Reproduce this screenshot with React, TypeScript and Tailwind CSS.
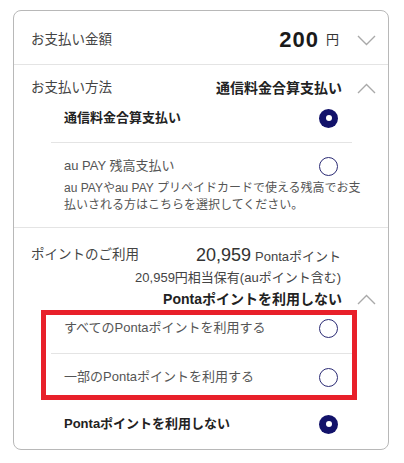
import React from "react";

const FONT = { fontFamily: '"Liberation Sans", "Noto Sans CJK JP", sans-serif' };

function Chevron({ up }: { up?: boolean }) {
  return (
    <svg width="19" height="11" viewBox="0 0 19 11" className="shrink-0">
      <polyline
        points={up ? "1,10 9.5,1.5 18,10" : "1,1 9.5,9.5 18,1"}
        fill="none"
        stroke="#a9a9a9"
        strokeWidth="1.4"
      />
    </svg>
  );
}

function Radio({ checked }: { checked?: boolean }) {
  return checked ? (
    <div className="w-[19px] h-[19px] rounded-full bg-[#12126a] flex items-center justify-center shrink-0">
      <div className="w-[6px] h-[6px] rounded-full bg-white" />
    </div>
  ) : (
    <div className="w-[19px] h-[19px] rounded-full border-[1.5px] border-[#2b2b74] bg-white shrink-0" />
  );
}

export default function App() {
  return (
    <div className="w-[404px] h-[463px] bg-white pt-[10px]" style={FONT}>
      <div className="ml-[13px] w-[376px] border border-[#b8b8b8] rounded-[8px] bg-white">
        {/* Row 1 */}
        <div className="h-[54px] pt-[5px] flex items-center pl-[17px] pr-[12px] border-b border-[#e4e4e4]">
          <span className="text-[13.5px] text-[#444] leading-[20px]">お支払い金額</span>
          <div className="ml-auto flex items-center">
            <span className="text-[22px] font-bold tracking-[1px] text-[#1a1a1a] leading-[26px]">200</span>
            <span className="text-[13px] text-[#333] ml-[7px] leading-[20px]">円</span>
            <div className="ml-[18px]">
              <Chevron />
            </div>
          </div>
        </div>

        {/* Section 2 */}
        <div className="border-b border-[#e4e4e4]">
          <div className="mt-[13px] h-[20px] flex items-center pl-[17px] pr-[12px]">
            <span className="text-[13.5px] text-[#444]">お支払い方法</span>
            <span className="ml-auto text-[14px] font-bold text-[#222]">通信料金合算支払い</span>
            <div className="ml-[15px]">
              <Chevron up />
            </div>
          </div>
          <div className="ml-[37px] mr-[36px]">
            <div className="pt-[10px] pb-[14px] pl-[13px] pr-[14px] border-b border-[#e4e4e4]">
              <div className="h-[20px] flex items-center justify-between">
                <span className="text-[13px] font-bold text-[#222]">通信料金合算支払い</span>
                <Radio checked />
              </div>
            </div>
            <div className="pt-[13px] pb-[13px] pl-[13px] pr-[14px]">
              <div className="h-[20px] flex items-center justify-between">
                <span className="text-[13px] text-[#555]">au PAY 残高支払い</span>
                <Radio />
              </div>
              <div className="mt-[4px] text-[12px] leading-[17px] text-[#555] whitespace-nowrap">
                au PAYやau PAY プリペイドカードで使える残高でお支
                <br />
                払いされる方はこちらを選択してください。
              </div>
            </div>
          </div>
        </div>

        {/* Section 3 */}
        <div className="pt-[15px]">
          <div className="h-[24px] flex items-center pl-[17px] pr-[47px]">
            <span className="text-[13.5px] text-[#444]">ポイントのご利用</span>
            <div className="ml-auto flex items-baseline">
              <span className="text-[18px] text-[#333]">20,959</span>
              <span className="text-[13px] text-[#444] ml-[4px]">Pontaポイント</span>
            </div>
          </div>
          <div className="mt-[2px] h-[18px] flex items-center justify-end pr-[47px]">
            <span className="text-[13px] text-[#444]">20,959円相当保有(auポイント含む)</span>
          </div>
          <div className="mt-[2px] h-[20px] flex items-center justify-end pr-[12px]">
            <span className="text-[14px] font-bold text-[#222]">Pontaポイントを利用しない</span>
            <div className="ml-[15px]">
              <Chevron up />
            </div>
          </div>
          <div className="ml-[37px] mr-[36px]">
            <div className="relative">
              <div className="pt-[9px] pb-[15px] pl-[13px] pr-[14px] border-b border-[#e4e4e4]">
                <div className="h-[20px] flex items-center justify-between">
                  <span className="text-[13px] text-[#555]">すべてのPontaポイントを利用する</span>
                  <Radio />
                </div>
              </div>
              <div className="pt-[13px] pb-[14px] pl-[13px] pr-[14px]">
                <div className="h-[20px] flex items-center justify-between">
                  <span className="text-[13px] text-[#555]">一部のPontaポイントを利用する</span>
                  <Radio />
                </div>
              </div>
              <div className="absolute top-[1px] bottom-[1px] left-[-10px] right-[-5px] border-[5px] border-[#e8202a] pointer-events-none" />
            </div>
            <div className="pt-[13px] pb-[15px] pl-[13px] pr-[14px]">
              <div className="h-[20px] flex items-center justify-between">
                <span className="text-[13px] font-bold text-[#222]">Pontaポイントを利用しない</span>
                <Radio checked />
              </div>
            </div>
          </div>
        </div>
      </div>
    </div>
  );
}
